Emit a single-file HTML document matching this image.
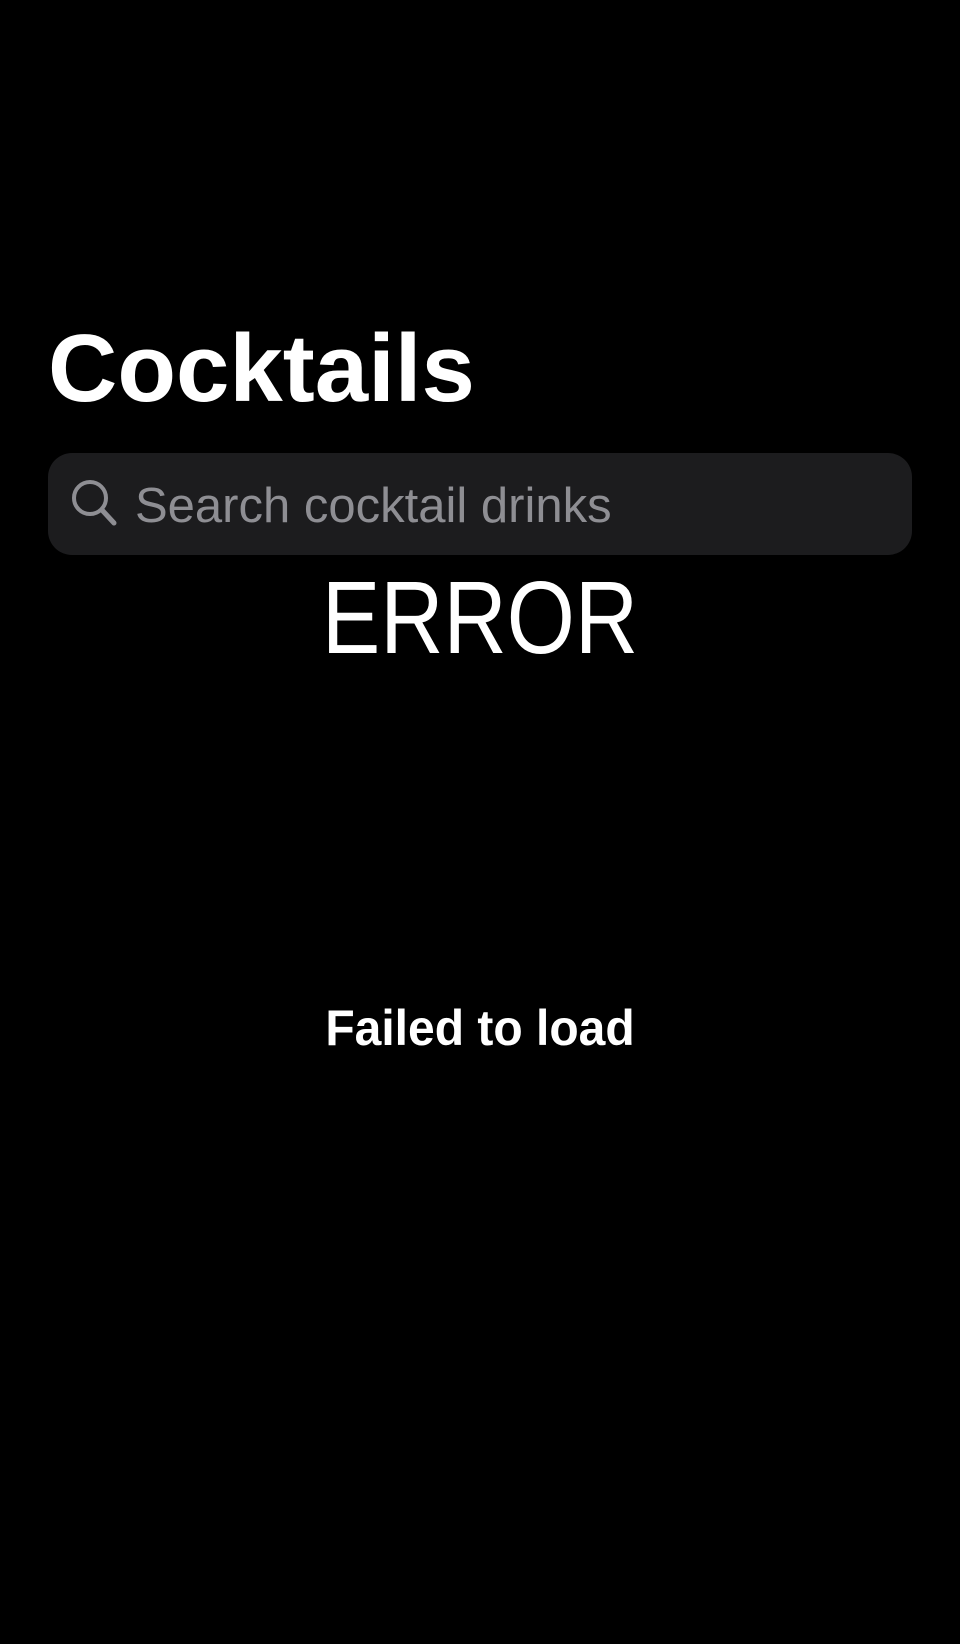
<!DOCTYPE html>
<html><head><meta charset="utf-8"><style>
html,body{margin:0;padding:0;background:#000;}
body{width:960px;height:1644px;position:relative;overflow:hidden;font-family:"Liberation Sans",sans-serif;color:#fff;}
.t{position:absolute;white-space:nowrap;line-height:1;}
#title{left:48px;top:321px;font-size:96px;font-weight:bold;}
#bar{position:absolute;left:48px;top:453px;width:864px;height:102px;background:#1c1c1e;border-radius:24px;}
#ph{left:135px;top:482px;font-size:49px;color:#8e8e93;}
#err{left:0;width:960px;text-align:center;top:566px;font-size:103px;transform:scaleX(0.85);}
#fail{left:0;width:960px;text-align:center;top:1003px;font-size:50px;font-weight:bold;transform:scaleX(0.96);}
</style></head><body>
<div class="t" id="title">Cocktails</div>
<div id="bar"></div>
<svg style="position:absolute;left:66px;top:476px" width="56" height="56" viewBox="0 0 56 56">
<circle cx="24" cy="22" r="16" fill="none" stroke="#8e8e93" stroke-width="4"/>
<line x1="36" y1="34" x2="48" y2="47" stroke="#8e8e93" stroke-width="5" stroke-linecap="round"/>
</svg>
<div class="t" id="ph">Search cocktail drinks</div>
<div class="t" id="err">ERROR</div>
<div class="t" id="fail">Failed to load</div>
</body></html>
